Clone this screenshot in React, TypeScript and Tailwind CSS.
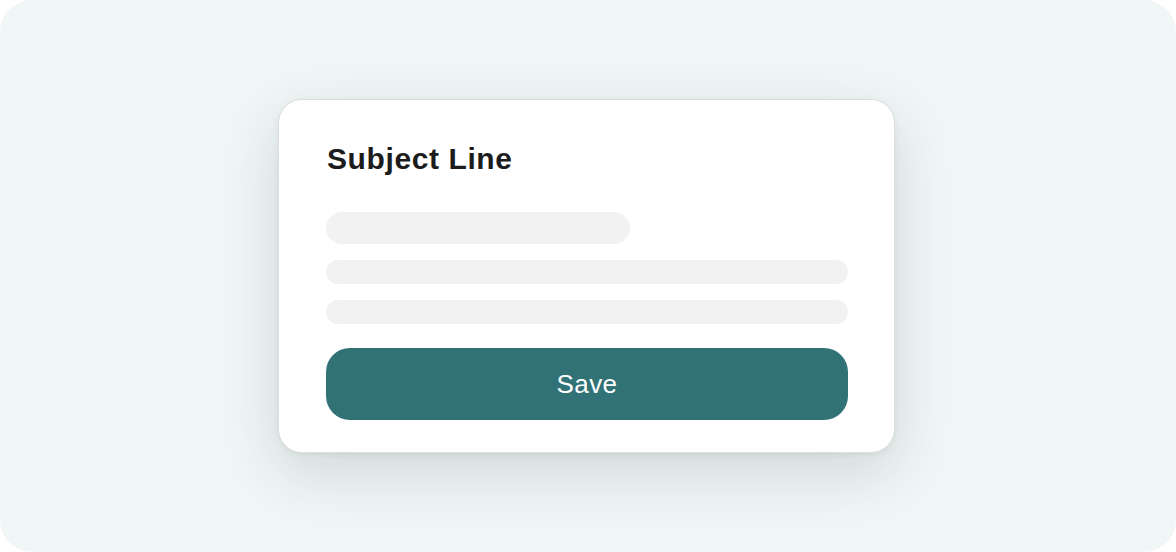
import React from "react";

export default function App() {
  return (
    <div className="w-[1176px] h-[552px] bg-white">
      <div className="w-[1176px] h-[552px] rounded-[32px] bg-[#f1f6f6] flex items-center justify-center" style={{ fontFamily: "'Liberation Sans', Arial, sans-serif" }}>
        <div className="w-[617px] h-[354px] mr-[3px] bg-white border border-[#dcdfdf] rounded-[24px] shadow-[0_20px_60px_rgba(40,60,60,0.16),0_2px_6px_rgba(0,0,0,0.06)] pl-[47px] pr-[46px] pt-[41px] flex flex-col">
          <h1 className="text-[30px] leading-[36px] font-bold text-[#1c1c1c] tracking-[0.6px] pl-[1px]">Subject Line</h1>
          <div className="mt-[35px] w-[304px] h-[32px] rounded-full bg-[#f2f2f2]" />
          <div className="mt-[16px] w-full h-[24px] rounded-full bg-[#f2f2f2]" />
          <div className="mt-[16px] w-full h-[24px] rounded-full bg-[#f2f2f2]" />
          <button className="mt-[24px] w-full h-[72px] rounded-[24px] bg-[#317276] text-white text-[26px] font-normal tracking-[0.4px] flex items-center justify-center">Save</button>
        </div>
      </div>
    </div>
  );
}
